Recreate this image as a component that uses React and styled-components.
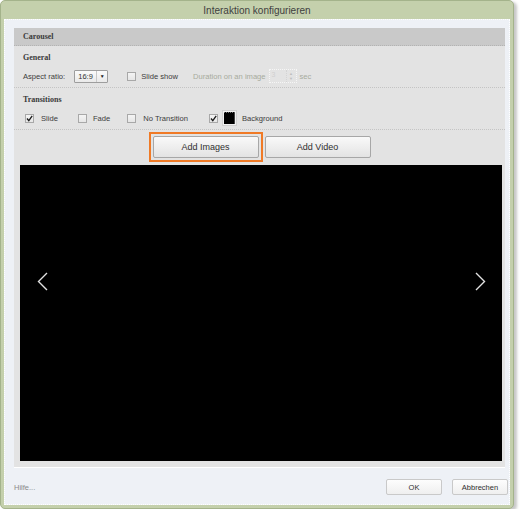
import React from "react";
import styled, { createGlobalStyle } from "styled-components";

const GlobalStyle = createGlobalStyle`
  html, body {
    margin: 0;
    padding: 0;
    background: #ffffff;
  }
  body {
    font-family: "Liberation Sans", Arial, sans-serif;
  }
`;

const dots = `
  background-image: radial-gradient(rgba(255, 255, 255, 0.35) 0.6px, transparent 0.7px);
  background-size: 4px 4px;
`;

const Window = styled.div`
  box-sizing: border-box;
  width: 514px;
  height: 509px;
  border: 1px solid #a4b38b;
  border-radius: 5px;
  background: #c4d0ac;
  padding: 0 3px 3px 3px;
  box-shadow: 3px 2px 3px rgba(0, 0, 0, 0.22);
  display: flex;
  flex-direction: column;
`;

const TitleBar = styled.div`
  height: 18px;
  flex: none;
  display: flex;
  align-items: center;
  justify-content: center;
  font-size: 10px;
  color: #3f3f3f;
`;

const Client = styled.div`
  box-sizing: border-box;
  flex: 1;
  background: #eef1f6;
  border: 1px dotted #ffffff;
  padding: 8px 4px 0 9px;
  display: flex;
  flex-direction: column;
`;

const Panel = styled.div`
  flex: none;
  background-color: #e3e3e3;
  ${dots}
  border-bottom: 1px solid #ffffff;
  padding-bottom: 6px;
  display: flex;
  flex-direction: column;
`;

const PanelHeader = styled.div`
  height: 17px;
  background: #c9c9c9;
  border-bottom: 1px dotted #b3b3b3;
  padding-left: 9px;
  display: flex;
  align-items: center;
  font-family: "Liberation Serif", "Times New Roman", serif;
  font-weight: bold;
  font-size: 8px;
  color: #3a3a3a;
`;

const Section = styled.div`
  height: 35px;
  box-sizing: content-box;
  padding: 6px 9px 0 9px;
  border-bottom: 1px dotted #c4c4c4;
  display: flex;
  flex-direction: column;
`;

const SectionTitle = styled.div`
  height: 12px;
  line-height: 12px;
  font-family: "Liberation Serif", "Times New Roman", serif;
  font-weight: bold;
  font-size: 8px;
  color: #3a3a3a;
`;

const Row = styled.div`
  margin-top: 4px;
  height: 16px;
  display: flex;
  align-items: center;
  padding-left: ${(p) => p.$indent || 0}px;
`;

const Text = styled.span`
  font-size: 7.6px;
  color: ${(p) => (p.$muted ? "#a7ab9d" : "#3c3c3c")};
  margin-left: ${(p) => p.$ml || 0}px;
  white-space: nowrap;
`;

const Select = styled.div`
  box-sizing: border-box;
  margin-left: ${(p) => p.$ml || 0}px;
  width: 34px;
  height: 13px;
  border: 1px solid #9d9d9d;
  border-radius: 1px;
  background: linear-gradient(#fbfbfb, #e9e9e9);
  display: flex;
  align-items: center;
  font-size: 7.5px;
  color: #333;
`;

const SelectValue = styled.span`
  flex: 1;
  padding-left: 3px;
  border-right: 1px solid #c8c8c8;
  line-height: 11px;
`;

const SelectArrow = styled.span`
  width: 10px;
  display: flex;
  justify-content: center;
  font-size: 5px;
  color: #222;
`;

const Box = styled.span`
  box-sizing: border-box;
  width: 9px;
  height: 9px;
  margin-left: ${(p) => p.$ml || 0}px;
  border: 1px solid #a8a8a8;
  background: linear-gradient(#f4f4f4, #e6e6e6);
  display: flex;
  align-items: center;
  justify-content: center;
  flex: none;
`;

const Check = ({ checked, ml }) => (
  <Box $ml={ml}>
    {checked && (
      <svg width="7" height="7" viewBox="0 0 7 7">
        <polyline points="1,3.5 2.8,5.6 6.2,0.8" fill="none" stroke="#1a1a1a" strokeWidth="1.3" />
      </svg>
    )}
  </Box>
);

const NumberInput = styled.div`
  box-sizing: border-box;
  margin-left: ${(p) => p.$ml || 0}px;
  width: 28px;
  height: 14px;
  display: flex;
  border: 1px dotted #f6f6f6;
`;

const NumberValue = styled.span`
  flex: 1;
  font-size: 7px;
  color: #d0d0d0;
  padding-left: 2px;
  line-height: 10px;
`;

const Spinner = styled.span`
  width: 9px;
  border-left: 1px dotted #d4d4d4;
  display: flex;
  flex-direction: column;
  align-items: center;
  justify-content: center;
  font-size: 4px;
  line-height: 5px;
  color: #bdbdbd;
`;

const Swatch = styled.span`
  box-sizing: border-box;
  margin-left: ${(p) => p.$ml || 0}px;
  width: 15px;
  height: 16px;
  padding: 1px;
  border: 1px solid #d0d0d0;
  background: #f1f1f1;
  display: flex;

  &::after {
    content: "";
    flex: 1;
    background: #000;
    border-top: 1px dotted #777;
    border-right: 1px solid #444;
  }
`;

const ButtonRow = styled.div`
  height: 35px;
  display: flex;
  align-items: center;
  justify-content: center;
  gap: 2px;
  padding-bottom: 1px;
  box-sizing: border-box;
`;

const Focus = styled.div`
  border: 2px solid #f07a26;
  padding: 2px;
  display: flex;
`;

const Button = styled.button`
  box-sizing: border-box;
  width: ${(p) => p.$w || 106}px;
  height: ${(p) => p.$h || 22}px;
  border: 1px solid ${(p) => p.$border || "#a7a7a7"};
  border-radius: 2px;
  background: ${(p) => p.$bg || "linear-gradient(#f9f9f9, #e3e3e3)"};
  font-family: "Liberation Sans", Arial, sans-serif;
  font-size: ${(p) => p.$fs || 9}px;
  color: #2f2f2f;
  padding: 0;
  cursor: default;
`;

const Stage = styled.div`
  position: relative;
  margin: 0 3px 0 6px;
  height: 296px;
  background: #000;
`;

const Arrow = styled.svg`
  position: absolute;
  top: 107px;
  ${(p) => (p.$side === "left" ? "left: 17px;" : "right: 16px;")}
`;

const Footer = styled.div`
  flex: 1;
  display: flex;
  align-items: flex-start;
  padding-top: 11px;
  margin-right: -3px;
`;

const Help = styled.span`
  flex: 1;
  font-size: 7.5px;
  color: #8a8a8a;
  padding-top: 4px;
`;

const FooterButtons = styled.div`
  display: flex;
  gap: 10px;
`;

export default function App() {
  return (
    <>
      <GlobalStyle />
      <Window>
        <TitleBar>Interaktion konfigurieren</TitleBar>
        <Client>
          <Panel>
            <PanelHeader>Carousel</PanelHeader>
            <Section>
              <SectionTitle>General</SectionTitle>
              <Row>
                <Text>Aspect ratio:</Text>
                <Select $ml={9}>
                  <SelectValue>16:9</SelectValue>
                  <SelectArrow>▼</SelectArrow>
                </Select>
                <Check ml={19} />
                <Text $ml={5}>Slide show</Text>
                <Text $muted $ml={15}>Duration on an image</Text>
                <NumberInput $ml={3}>
                  <NumberValue>3</NumberValue>
                  <Spinner>
                    <span>▲</span>
                    <span>▼</span>
                  </Spinner>
                </NumberInput>
                <Text $muted $ml={3}>sec</Text>
              </Row>
            </Section>
            <Section>
              <SectionTitle>Transitions</SectionTitle>
              <Row $indent={2}>
                <Check checked />
                <Text $ml={7}>Slide</Text>
                <Check ml={20} />
                <Text $ml={6}>Fade</Text>
                <Check ml={17} />
                <Text $ml={7}>No Transition</Text>
                <Check checked ml={21} />
                <Swatch $ml={4} />
                <Text $ml={5}>Background</Text>
              </Row>
            </Section>
            <ButtonRow>
              <Focus>
                <Button>Add Images</Button>
              </Focus>
              <Button>Add Video</Button>
            </ButtonRow>
            <Stage>
              <Arrow $side="left" width="11" height="19" viewBox="0 0 11 19">
                <polyline points="10,1 1.5,9.5 10,18" fill="none" stroke="#e2e2e2" strokeWidth="1.4" />
              </Arrow>
              <Arrow $side="right" width="11" height="19" viewBox="0 0 11 19">
                <polyline points="1,1 9.5,9.5 1,18" fill="none" stroke="#e2e2e2" strokeWidth="1.4" />
              </Arrow>
            </Stage>
          </Panel>
          <Footer>
            <Help>Hilfe...</Help>
            <FooterButtons>
              <Button $w={56} $h={16} $fs={7.5} $border="#c9c9c9" $bg="linear-gradient(#fdfdfd, #efefef)">
                OK
              </Button>
              <Button $w={56} $h={16} $fs={7.5} $border="#c9c9c9" $bg="linear-gradient(#fdfdfd, #efefef)">
                Abbrechen
              </Button>
            </FooterButtons>
          </Footer>
        </Client>
      </Window>
    </>
  );
}
